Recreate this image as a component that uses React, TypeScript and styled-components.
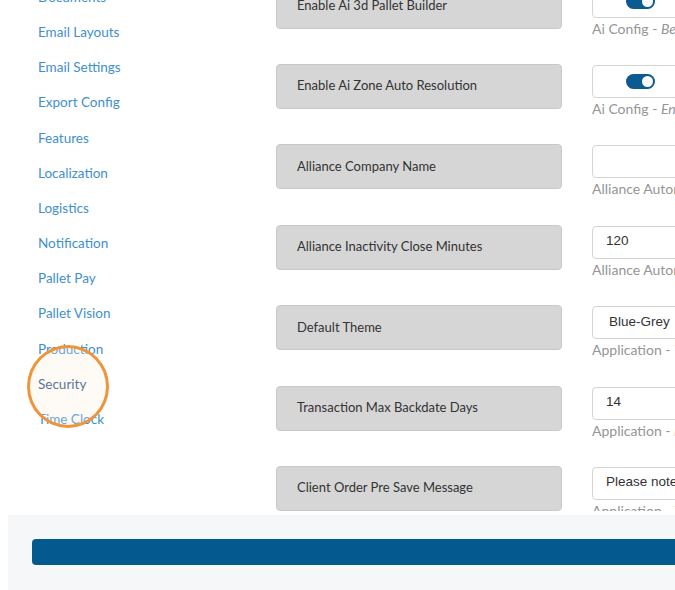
import React from "react";
import styled, { createGlobalStyle } from "styled-components";

const Global = createGlobalStyle`
  html, body {
    margin: 0;
    padding: 0;
    overflow: hidden;
    background: #ffffff;
    font-family: Lato, "Open Sans", Arial, sans-serif;
  }
`;

const Page = styled.div`
  display: flex;
  margin-top: -20px;
  width: 900px;
`;

const Sidebar = styled.nav`
  width: 276px;
  flex: none;
  display: flex;
  flex-direction: column;
  padding-left: 38px;
  box-sizing: border-box;
  position: relative;
`;

const NavLink = styled.a<{ $active?: boolean }>`
  display: block;
  height: 35.17px;
  line-height: 35.17px;
  font-size: 13.5px;
  color: ${(p) => (p.$active ? "#1d4f80" : "#4090cf")};
  text-decoration: none;
  white-space: nowrap;
`;

/* orange ring drawn around the current section */
const Highlight = styled.span`
  position: absolute;
  left: 27px;
  top: 365px;
  width: 82px;
  height: 83px;
  border: 3px solid #f0943a;
  border-radius: 50%;
  box-sizing: border-box;
  background: rgba(252, 236, 220, 0.25);
  pointer-events: none;
`;

const Main = styled.main`
  flex: 1;
  display: flex;
  flex-direction: column;
  gap: 35.4px;
  padding-top: 3.6px;
`;

const Row = styled.div`
  display: flex;
  gap: 30px;
  height: 45px;
`;

const LabelBox = styled.div`
  width: 286px;
  height: 45px;
  box-sizing: border-box;
  flex: none;
  background: #d6d6d6;
  border: 1px solid #c9c9c9;
  border-radius: 4px;
  padding: 0 0 2px 20px;
  display: flex;
  align-items: center;
  font-size: 13px;
  color: #333333;
  white-space: nowrap;
`;

const Field = styled.div`
  width: 320px;
  flex: none;
  padding-top: 1px;
  display: flex;
  flex-direction: column;
`;

const InputBox = styled.div<{ $pad?: number }>`
  flex: none;
  height: 33px;
  box-sizing: border-box;
  border: 1px solid #d4d4d4;
  border-radius: 4px;
  background: #ffffff;
  display: flex;
  align-items: center;
  padding: 0 0 3px ${(p) => p.$pad ?? 13}px;
  font-family: "Liberation Sans", Arial, sans-serif;
  font-size: 13.5px;
  color: #333333;
  white-space: nowrap;
`;

const Switch = styled.span`
  margin: 3px 0 0 20px;
  width: 29px;
  height: 15px;
  border-radius: 8px;
  background: #0b5a91;
  position: relative;
  &::after {
    content: "";
    position: absolute;
    right: 2px;
    top: 2px;
    width: 11px;
    height: 11px;
    border-radius: 50%;
    background: #ffffff;
  }
`;

const Help = styled.div`
  flex: none;
  margin-top: 1px;
  line-height: 20px;
  font-size: 14px;
  color: #959595;
  white-space: nowrap;
  em {
    font-style: italic;
  }
`;

const Footer = styled.footer`
  position: fixed;
  left: 8px;
  right: 0;
  bottom: 0;
  height: 75px;
  background: #f5f7f9;
  padding: 24px 0 0 24px;
  box-sizing: border-box;
`;

const SaveBar = styled.button`
  display: block;
  width: 100%;
  height: 26px;
  border: none;
  border-radius: 4px 0 0 4px;
  background: #045a8f;
`;

const links = [
  "Documents",
  "Email Layouts",
  "Email Settings",
  "Export Config",
  "Features",
  "Localization",
  "Logistics",
  "Notification",
  "Pallet Pay",
  "Pallet Vision",
  "Production",
  "Security",
  "Time Clock",
];

type Setting = {
  label: string;
  kind: "switch" | "text" | "select";
  value?: string;
  group: string;
  note: string;
};

const settings: Setting[] = [
  { label: "Enable Ai 3d Pallet Builder", kind: "switch", group: "Ai Config", note: "Beta 3D pallet building assistant" },
  { label: "Enable Ai Zone Auto Resolution", kind: "switch", group: "Ai Config", note: "Enables automatic zone resolution" },
  { label: "Alliance Company Name", kind: "text", value: "", group: "Alliance Automation", note: "Company name" },
  { label: "Alliance Inactivity Close Minutes", kind: "text", value: "120", group: "Alliance Automation", note: "Minutes" },
  { label: "Default Theme", kind: "select", value: "Blue-Grey", group: "Application", note: "Theme used by default" },
  { label: "Transaction Max Backdate Days", kind: "text", value: "14", group: "Application", note: "How many days back" },
  { label: "Client Order Pre Save Message", kind: "text", value: "Please note", group: "Application", note: "Text shown before saving" },
];

export default function App() {
  return (
    <>
      <Global />
      <Page>
        <Sidebar>
          {links.map((l) => (
            <NavLink key={l} href="#" $active={l === "Security"}>
              {l}
            </NavLink>
          ))}
          <Highlight />
        </Sidebar>
        <Main>
          {settings.map((s) => (
            <Row key={s.label}>
              <LabelBox>{s.label}</LabelBox>
              <Field>
                <InputBox $pad={s.kind === "select" ? 16 : 13}>
                  {s.kind === "switch" ? <Switch /> : s.value}
                </InputBox>
                <Help>
                  {s.group} - <em>{s.note}</em>
                </Help>
              </Field>
            </Row>
          ))}
        </Main>
      </Page>
      <Footer>
        <SaveBar aria-label="Save" />
      </Footer>
    </>
  );
}
